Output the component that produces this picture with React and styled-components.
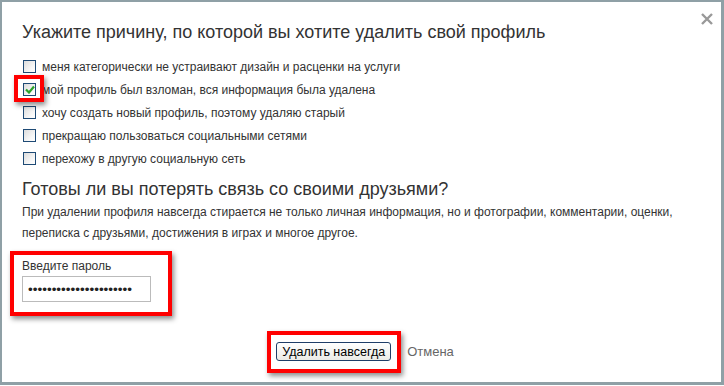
import React, { useState } from 'react';
import styled, { createGlobalStyle, css } from 'styled-components';

const GlobalStyle = createGlobalStyle`
  html, body {
    margin: 0;
    padding: 0;
    background: #fff;
  }
  body {
    font-family: "Liberation Sans", Arial, sans-serif;
    color: #333;
  }
`;

const Dialog = styled.div`
  position: relative;
  box-sizing: border-box;
  width: 724px;
  height: 385px;
  border: 2px solid #8fa0a6;
  border-right-width: 3px;
  border-bottom-width: 3px;
  background: #fff;
  padding: 20px 20px 0 20px;
`;

const Close = styled.button`
  position: absolute;
  top: 8px;
  right: 5px;
  width: 18px;
  height: 18px;
  padding: 0;
  border: 0;
  background: none;
  cursor: pointer;
  display: flex;
  align-items: center;
  justify-content: center;
`;

const Title = styled.h2`
  margin: 0 0 12px;
  font-size: 18px;
  font-weight: normal;
  color: #333;
`;

const Reasons = styled.ul`
  list-style: none;
  margin: 0;
  padding: 0;
`;

const Reason = styled.li`
  display: flex;
  align-items: center;
  height: 23px;
  font-size: 12px;
  color: #333;
`;

const Ring = styled.span`
  position: relative;
  display: inline-flex;

  &::after {
    content: '';
    position: absolute;
    pointer-events: none;
    border: 4px solid #f00;
    box-shadow: 2px 3px 5px rgba(0, 0, 0, 0.45);
    ${p => css`
      top: -${p.$t}px;
      left: -${p.$l}px;
      right: -${p.$r}px;
      bottom: -${p.$b}px;
    `}
  }
`;

const Box = styled.span`
  box-sizing: border-box;
  width: 13px;
  height: 13px;
  margin: 0 6px 0 1px;
  border: 1px solid #1e4a75;
  background: linear-gradient(135deg, #dcdcdc 0%, #f8f8f8 70%, #fff 100%);
  display: flex;
  align-items: center;
  justify-content: center;
`;

const Subtitle = styled.h3`
  margin: 9px 0 2px;
  font-size: 18px;
  font-weight: normal;
  color: #333;
`;

const Note = styled.p`
  margin: 0;
  font-size: 12px;
  line-height: 21px;
  color: #333;
`;

const PassRow = styled.div`
  margin-top: 12px;
`;

const PassField = styled.label`
  display: flex;
  flex-direction: column;
  gap: 3px;
  font-size: 12px;
  line-height: 14px;
  color: #333;
`;

const Input = styled.input`
  box-sizing: border-box;
  width: 129px;
  height: 26px;
  border: 1px solid #bbb;
  padding: 0 5px;
  font-family: "Liberation Sans", Arial, sans-serif;
  font-size: 13.5px;
  color: #222;
  outline: none;
`;

const Actions = styled.div`
  display: flex;
  align-items: center;
  justify-content: center;
  gap: 16px;
  margin-top: 40px;
  padding-left: 7px;
`;

const Button = styled.button`
  height: 19px;
  padding: 0 5px;
  border: 1px solid #1f3e68;
  border-radius: 3px;
  background: linear-gradient(#ffffff, #ebebe6);
  font-family: "Liberation Sans", Arial, sans-serif;
  font-size: 12.5px;
  color: #000;
  cursor: pointer;
`;

const Cancel = styled.a`
  font-size: 13px;
  color: #666;
  text-decoration: none;
`;

const reasons = [
  'меня категорически не устраивают дизайн и расценки на услуги',
  'мой профиль был взломан, вся информация была удалена',
  'хочу создать новый профиль, поэтому удаляю старый',
  'прекращаю пользоваться социальными сетями',
  'перехожу в другую социальную сеть',
];

const Check = () => (
  <svg width="10" height="9" viewBox="0 0 10 9">
    <path d="M1 4.5 L4 7.5 L9 1.5" fill="none" stroke="#2aa32a" strokeWidth="2.2" />
  </svg>
);

export default function App() {
  const [checked, setChecked] = useState(1);

  return (
    <>
      <GlobalStyle />
      <Dialog>
        <Close aria-label="close">
          <svg width="12" height="12" viewBox="0 0 12 12">
            <path d="M1 1 L11 11 M11 1 L1 11" stroke="#999" strokeWidth="2.4" />
          </svg>
        </Close>
        <Title>Укажите причину, по которой вы хотите удалить свой профиль</Title>
        <Reasons>
          {reasons.map((r, i) => {
            const box = <Box onClick={() => setChecked(i)}>{checked === i && <Check />}</Box>;
            return (
              <Reason key={i}>
                {i === 1 ? <Ring $t={8} $l={8} $r={2} $b={6}>{box}</Ring> : box}
                {r}
              </Reason>
            );
          })}
        </Reasons>
        <Subtitle>Готовы ли вы потерять связь со своими друзьями?</Subtitle>
        <Note>
          При удалении профиля навсегда стирается не только личная информация, но и фотографии, комментарии, оценки,
          переписка с друзьями, достижения в играх и многое другое.
        </Note>
        <PassRow>
          <Ring $t={8} $l={12} $r={21} $b={14}>
            <PassField>
              Введите пароль
              <Input type="password" defaultValue="######################" />
            </PassField>
          </Ring>
        </PassRow>
        <Actions>
          <Ring $t={11} $l={9} $r={10} $b={12}>
            <Button>Удалить навсегда</Button>
          </Ring>
          <Cancel href="#">Отмена</Cancel>
        </Actions>
      </Dialog>
    </>
  );
}
